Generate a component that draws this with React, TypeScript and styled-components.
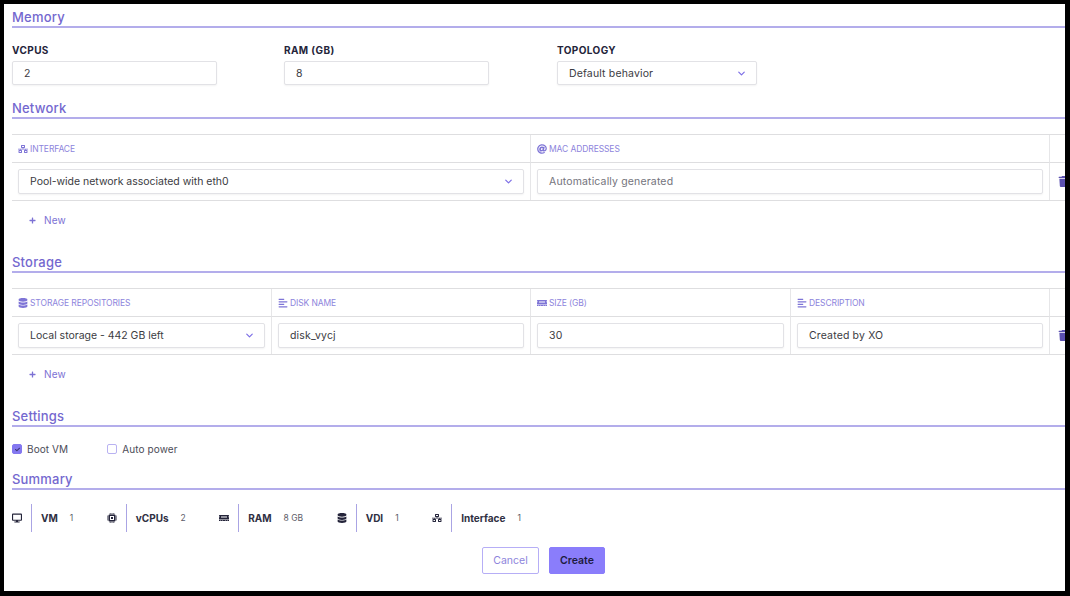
import React from "react";
import styled, { createGlobalStyle } from "styled-components";
import {
  FaNetworkWired, FaAt, FaDatabase, FaAlignLeft, FaMemory, FaTrash, FaDesktop, FaPlus, FaCheck,
} from "react-icons/fa";
import { LuChevronDown } from "react-icons/lu";

const Global = createGlobalStyle`
  html, body { margin: 0; padding: 0; background: #000; }
  body { font-family: "Inter", "Open Sans", sans-serif; }
  * { box-sizing: border-box; }
`;

const Frame = styled.div`
  width: 1061px;
  height: 587px;
  margin: 4px 0 0 4px;
  background: #fff;
  overflow: hidden;
  padding: 0 0 0 8px;
`;

const Inner = styled.div`
  width: 1070px;
`;

const Heading = styled.h2<{ $top: number; $after: number }>`
  margin: ${(p) => p.$top}px 0 ${(p) => p.$after}px;
  height: 20px;
  font-size: 13px;
  line-height: 18.5px;
  font-weight: 450;
  letter-spacing: 0.2px;
  color: #7468cf;
  border-bottom: 2px solid #b3adeb;
`;

const Fields = styled.div`
  display: flex;
`;

const Field = styled.div<{ $w: number; $gap: number }>`
  width: ${(p) => p.$w}px;
  margin-right: ${(p) => p.$gap}px;
`;

const Label = styled.div`
  font-size: 10px;
  line-height: 12px;
  font-weight: 700;
  letter-spacing: 0.4px;
  color: #24243a;
  margin-bottom: 5px;
`;

const Control = styled.div<{ $muted?: boolean; $tight?: boolean }>`
  height: 24px;
  width: 100%;
  border: 1px solid #e2e2e6;
  border-radius: 2px;
  padding: 0 11px;
  display: flex;
  align-items: center;
  justify-content: space-between;
  font-size: 10.5px;
  letter-spacing: ${(p) => (p.$tight ? "-0.02px" : "0.15px")};
  white-space: nowrap;
  color: ${(p) => (p.$muted ? "#73737c" : "#3b3b42")};
  background: #fff;
  box-shadow: 0 1px 2px rgba(0, 0, 0, 0.05);
`;

const Chevron = styled(LuChevronDown)`
  color: #7c6ee6;
  font-size: 11px;
  stroke-width: 2.6;
  margin-right: -2px;
  flex: none;
`;

const Table = styled.div<{ $cols: string }>`
  display: grid;
  grid-template-columns: ${(p) => p.$cols};
  border-top: 1px solid #dedee0;
  border-bottom: 1px solid #dedee0;
`;

const HeadCell = styled.div<{ $last?: boolean }>`
  height: 28px;
  padding-left: 6px;
  display: flex;
  align-items: center;
  gap: 2px;
  font-size: 8.5px;
  letter-spacing: -0.1px;
  color: #8d84dc;
  border-bottom: 1px solid #dedee0;
  border-right: ${(p) => (p.$last ? "none" : "1px solid #e6e6e8")};
  svg { color: #7e74d6; font-size: 10px; flex: none; }
`;

const BodyCell = styled.div<{ $last?: boolean }>`
  height: 37px;
  padding: 0 6px;
  display: flex;
  align-items: center;
  border-right: ${(p) => (p.$last ? "none" : "1px solid #e6e6e8")};
`;

const BodyControl = styled(Control)`
  height: 25px;
`;

const Trash = styled(FaTrash)`
  color: #5b50b0;
  font-size: 11px;
  margin-left: 2px;
  flex: none;
`;

const NewRow = styled.div`
  height: 38px;
  padding-left: 17px;
  display: flex;
  align-items: center;
  gap: 8px;
  font-size: 10px;
  letter-spacing: 0.2px;
  color: #7c71d4;
  svg { font-size: 7px; }
`;

const Checks = styled.div`
  display: flex;
  align-items: center;
  height: 14px;
  gap: 39px;
`;

const CheckItem = styled.label`
  display: flex;
  align-items: center;
  gap: 5px;
  font-size: 10px;
  letter-spacing: 0.1px;
  color: #4c4c58;
`;

const Box = styled.span<{ $on?: boolean }>`
  width: 10px;
  height: 10px;
  border-radius: 2px;
  border: 1px solid ${(p) => (p.$on ? "#8478f0" : "#b9b2f2")};
  background: ${(p) => (p.$on ? "#8478f0" : "#fff")};
  display: flex;
  align-items: center;
  justify-content: center;
  svg { font-size: 5px; color: #3a3470; }
`;

const Summary = styled.div`
  display: flex;
  align-items: center;
  height: 28px;
`;

const SummaryItem = styled.div`
  display: flex;
  align-items: center;
  height: 28px;
  margin-right: 33.5px;
  svg { font-size: 10px; color: #24243a; flex: none; }
`;

const Divider = styled.span`
  width: 1px;
  height: 28px;
  background: #aaa4e4;
  margin: 0 9px;
`;

const SummaryLabel = styled.span`
  font-size: 10px;
  font-weight: 700;
  color: #2f2f42;
  margin-right: 12px;
`;

const SummaryValue = styled.span`
  font-size: 8.5px;
  color: #5c5c68;
`;

const Actions = styled.div`
  display: flex;
  justify-content: center;
  gap: 10px;
  margin-top: 15px;
  width: 1063px;
`;

const Button = styled.button<{ $primary?: boolean }>`
  height: 27px;
  border-radius: 2px;
  font-family: inherit;
  font-size: 10.5px;
  font-weight: ${(p) => (p.$primary ? 600 : 400)};
  padding: 0;
  width: ${(p) => (p.$primary ? 56 : 57)}px;
  border: 1px solid ${(p) => (p.$primary ? "#8a7dfb" : "#b6aef6")};
  background: ${(p) => (p.$primary ? "#8a7dfb" : "#fff")};
  color: ${(p) => (p.$primary ? "#1e1c40" : "#8d84dc")};
`;

const Chip = () => (
  <svg width="1em" height="1em" viewBox="0 0 20 20" fill="currentColor">
    <path fillRule="evenodd" d="M5 3h10a2 2 0 0 1 2 2v10a2 2 0 0 1-2 2H5a2 2 0 0 1-2-2V5a2 2 0 0 1 2-2zm1 3v8h8V6H6z" />
    <rect x="8" y="8" width="4" height="4" />
    <path d="M5.500 0h1.600v3H5.500zM9.200 0h1.600v3H9.200zM12.900 0h1.600v3h-1.600zM5.500 17h1.600v3H5.500zM9.200 17h1.600v3H9.200zM12.900 17h1.600v3h-1.600zM0 5.500h3v1.600H0zM0 9.200h3v1.600H0zM0 12.900h3v1.600H0zM17 5.500h3v1.600h-3zM17 9.200h3v1.600h-3zM17 12.900h3v1.600h-3z" />
  </svg>
);

const summary = [
  { icon: <FaDesktop />, label: "VM", value: "1" },
  { icon: <Chip />, label: "vCPUs", value: "2" },
  { icon: <FaMemory />, label: "RAM", value: "8 GB" },
  { icon: <FaDatabase />, label: "VDI", value: "1" },
  { icon: <FaNetworkWired />, label: "Interface", value: "1" },
];

export default function App() {
  return (
    <Frame>
      <Global />
      <Inner>
        <Heading $top={4} $after={16}>Memory</Heading>
        <Fields>
          <Field $w={205} $gap={67}>
            <Label>VCPUS</Label>
            <Control>2</Control>
          </Field>
          <Field $w={205} $gap={68}>
            <Label>RAM (GB)</Label>
            <Control>8</Control>
          </Field>
          <Field $w={200} $gap={0}>
            <Label>TOPOLOGY</Label>
            <Control>Default behavior<Chevron /></Control>
          </Field>
        </Fields>

        <Heading $top={14} $after={15}>Network</Heading>
        <Table $cols="519px 519px 20px">
          <HeadCell><FaNetworkWired />INTERFACE</HeadCell>
          <HeadCell><FaAt />MAC ADDRESSES</HeadCell>
          <HeadCell $last />
          <BodyCell><BodyControl $tight>Pool-wide network associated with eth0<Chevron /></BodyControl></BodyCell>
          <BodyCell><BodyControl $muted>Automatically generated</BodyControl></BodyCell>
          <BodyCell $last><Trash /></BodyCell>
        </Table>
        <NewRow><FaPlus />New</NewRow>

        <Heading $top={14} $after={15}>Storage</Heading>
        <Table $cols="260px 259px 260px 259px 20px">
          <HeadCell><FaDatabase />STORAGE REPOSITORIES</HeadCell>
          <HeadCell><FaAlignLeft />DISK NAME</HeadCell>
          <HeadCell><FaMemory />SIZE (GB)</HeadCell>
          <HeadCell><FaAlignLeft />DESCRIPTION</HeadCell>
          <HeadCell $last />
          <BodyCell><BodyControl $tight>Local storage - 442 GB left<Chevron /></BodyControl></BodyCell>
          <BodyCell><BodyControl>disk_vycj</BodyControl></BodyCell>
          <BodyCell><BodyControl>30</BodyControl></BodyCell>
          <BodyCell><BodyControl>Created by XO</BodyControl></BodyCell>
          <BodyCell $last><Trash /></BodyCell>
        </Table>
        <NewRow><FaPlus />New</NewRow>

        <Heading $top={14} $after={15}>Settings</Heading>
        <Checks>
          <CheckItem><Box $on><FaCheck /></Box>Boot VM</CheckItem>
          <CheckItem><Box />Auto power</CheckItem>
        </Checks>

        <Heading $top={14} $after={14}>Summary</Heading>
        <Summary>
          {summary.map((s) => (
            <SummaryItem key={s.label}>
              {s.icon}
              <Divider />
              <SummaryLabel>{s.label}</SummaryLabel>
              <SummaryValue>{s.value}</SummaryValue>
            </SummaryItem>
          ))}
        </Summary>
        <Actions>
          <Button>Cancel</Button>
          <Button $primary>Create</Button>
        </Actions>
      </Inner>
    </Frame>
  );
}
